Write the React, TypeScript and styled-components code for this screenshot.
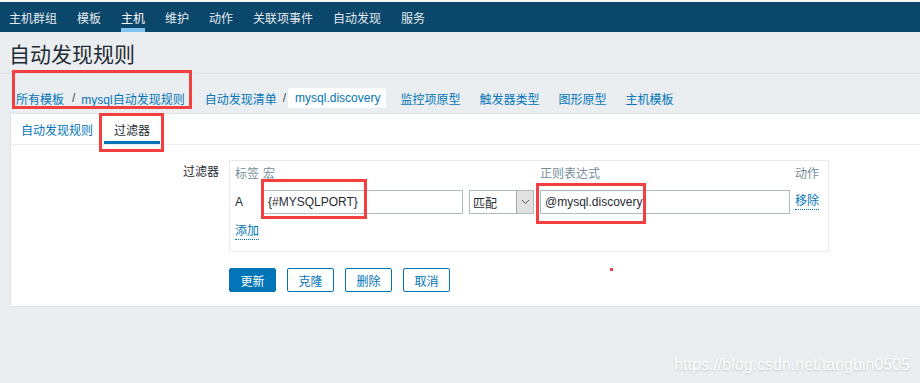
import React from 'react';
import styled, { createGlobalStyle } from 'styled-components';

const GlobalStyle = createGlobalStyle`
  html, body {
    margin: 0;
    padding: 0;
    background: #ebeef1;
    overflow: hidden;
    font-family: "Liberation Sans", "Noto Sans CJK SC", Arial, sans-serif;
    font-size: 12px;
    color: #1f2c33;
  }
`;

const Page = styled.div`
  position: relative;
  width: 920px;
  height: 383px;
  overflow: hidden;
`;

const TopNav = styled.nav`
  display: flex;
  gap: 20px;
  height: 30px;
  padding-left: 9px;
  background: #0b466b;
  border-top: 2px solid #f3f5f6;
`;

const NavItem = styled.a<{ $active?: boolean }>`
  display: flex;
  align-items: center;
  color: ${p => (p.$active ? '#ffffff' : '#e4ebef')};
  border-bottom: 4px solid ${p => (p.$active ? '#82c4f2' : 'transparent')};
  padding-top: 4px;
  cursor: pointer;
`;

const Header = styled.div`
  display: flex;
  align-items: center;
  height: 41px;
  padding-left: 9px;
  border-bottom: 1px solid #dde3e6;
`;

const Title = styled.h1`
  margin: 0;
  font-size: 21px;
  font-weight: normal;
  color: #1f2c33;
`;

const Crumbs = styled.div`
  display: flex;
  align-items: center;
  height: 20px;
  padding: 14px 0 5px 16px;
`;

const CrumbGroup = styled.div`
  position: relative;
  display: flex;
  align-items: center;
  height: 20px;
  & + & {
    margin-left: 20px;
  }
`;

const CrumbLink = styled.a`
  color: #0275b8;
  cursor: pointer;
`;

const Sep = styled.span<{ $tight?: boolean }>`
  color: #3c4a52;
  margin: ${p => (p.$tight ? '0 3px 0 6px' : '0 6px 0 8px')};
`;

const CrumbCurrent = styled.span`
  display: flex;
  align-items: center;
  height: 20px;
  padding: 0 6px 0 7px;
  background: #ffffff;
  border-radius: 2px;
  color: #0275b8;
  margin-left: -1px;
`;

const SubLink = styled.a<{ $first?: boolean }>`
  color: #0275b8;
  margin-left: ${p => (p.$first ? '14px' : '19px')};
  cursor: pointer;
`;

const Panel = styled.div`
  margin-left: 10px;
  margin-right: -10px;
  background: #ffffff;
  border: 1px solid #dfe4e7;
  padding-bottom: 14px;
`;

const Tabs = styled.div`
  display: flex;
  height: 30px;
  border-bottom: 1px solid #ebeef1;
`;

const Tab = styled.div<{ $active?: boolean }>`
  position: relative;
  display: flex;
  align-items: center;
  padding: 0 10px;
  color: ${p => (p.$active ? '#1f2c33' : '#0275b8')};
  box-shadow: ${p => (p.$active ? 'inset 0 -3px 0 #0275b8' : 'none')};
  & + & {
    margin-left: 1px;
  }
`;

const Form = styled.div`
  display: grid;
  grid-template-columns: 208px auto;
  column-gap: 10px;
  row-gap: 16px;
  padding-top: 15px;
`;

const FieldLabel = styled.div`
  text-align: right;
  line-height: 20px;
  padding-top: 2px;
`;

const FilterBox = styled.div`
  width: 584px;
  border: 1px solid #e8ebed;
  padding: 1px 9px 9px 5px;
  display: grid;
  grid-template-columns: 28px 206px 71px 255px auto;
  grid-template-rows: 20px 24px 20px;
  row-gap: 8px;
  align-items: center;
`;

const ColHead = styled.div<{ $right?: boolean }>`
  color: #768d99;
  text-align: ${p => (p.$right ? 'right' : 'left')};
`;

const RowKey = styled.div`
  color: #1f2c33;
`;

const Field = styled.div<{ $w: number }>`
  position: relative;
  box-sizing: border-box;
  width: ${p => p.$w}px;
  height: 24px;
  border: 1px solid #acbbc2;
  padding-left: 4px;
  display: flex;
  align-items: center;
  background: #ffffff;
  color: #1f2c33;
  white-space: nowrap;
`;

const Select = styled.div`
  box-sizing: border-box;
  width: 65px;
  height: 24px;
  border: 1px solid #acbbc2;
  display: flex;
  align-items: stretch;
  background: #ffffff;
`;

const SelectValue = styled.span`
  flex: 1;
  display: flex;
  align-items: center;
  padding-left: 3px;
`;

const SelectArrow = styled.span`
  width: 16px;
  background: #e1e1e1;
  border-left: 1px solid #a6a6a6;
  display: flex;
  align-items: center;
  justify-content: center;
`;

const DottedLink = styled.a`
  justify-self: start;
  color: #0275b8;
  border-bottom: 1px dotted #0275b8;
  line-height: 15px;
  cursor: pointer;
`;

const Buttons = styled.div`
  position: relative;
  display: flex;
  gap: 11px;
`;

const Button = styled.button<{ $primary?: boolean }>`
  box-sizing: border-box;
  width: 47px;
  height: 24px;
  padding: 0;
  border: 1px solid #0275b8;
  border-radius: 2px;
  background: ${p => (p.$primary ? '#0275b8' : '#ffffff')};
  color: ${p => (p.$primary ? '#ffffff' : '#0275b8')};
  font-family: inherit;
  font-size: 12px;
  cursor: pointer;
`;

// red annotation frames drawn over the screenshot
const Mark = styled.span<{ $l: number; $t: number; $w: number; $h: number }>`
  position: absolute;
  left: ${p => p.$l}px;
  top: ${p => p.$t}px;
  width: ${p => p.$w}px;
  height: ${p => p.$h}px;
  box-sizing: border-box;
  border: 3px solid #f1403f;
  pointer-events: none;
  z-index: 2;
`;

const Dot = styled.span`
  position: absolute;
  left: 381px;
  top: 0;
  width: 3px;
  height: 3px;
  background: #f1403f;
`;

const Watermark = styled.div`
  position: absolute;
  right: 10px;
  top: 355px;
  font-size: 16px;
  line-height: 20px;
  color: #ffffff;
  text-shadow: 0 1px 2px rgba(0, 0, 0, 0.18);
`;

const navItems = ['主机群组', '模板', '主机', '维护', '动作', '关联项事件', '自动发现', '服务'];
const subLinks = ['监控项原型', '触发器类型', '图形原型', '主机模板'];

export default function App() {
  return (
    <Page>
      <GlobalStyle />
      <TopNav>
        {navItems.map(n => (
          <NavItem key={n} $active={n === '主机'}>{n}</NavItem>
        ))}
      </TopNav>
      <Header>
        <Title>自动发现规则</Title>
      </Header>
      <Crumbs>
        <CrumbGroup>
          <CrumbLink>所有模板</CrumbLink>
          <Sep>/</Sep>
          <CrumbLink>mysql自动发现规则</CrumbLink>
          <Mark $l={-4} $t={-18} $w={180} $h={39} />
        </CrumbGroup>
        <CrumbGroup>
          <CrumbLink>自动发现清单</CrumbLink>
          <Sep $tight>/</Sep>
          <CrumbCurrent>mysql.discovery</CrumbCurrent>
        </CrumbGroup>
        {subLinks.map((s, i) => (
          <SubLink key={s} $first={i === 0}>{s}</SubLink>
        ))}
      </Crumbs>
      <Panel>
        <Tabs>
          <Tab>自动发现规则</Tab>
          <Tab $active>
            过滤器
            <Mark $l={-5} $t={-1} $w={65} $h={39} />
          </Tab>
        </Tabs>
        <Form>
          <FieldLabel>过滤器</FieldLabel>
          <FilterBox>
            <ColHead>标签</ColHead>
            <ColHead>宏</ColHead>
            <span />
            <ColHead>正则表达式</ColHead>
            <ColHead $right>动作</ColHead>

            <RowKey>A</RowKey>
            <Field $w={200}>
              {'{#MYSQLPORT}'}
              <Mark $l={-3} $t={-12} $w={106} $h={40} />
            </Field>
            <Select>
              <SelectValue>匹配</SelectValue>
              <SelectArrow>
                <svg width="9" height="6" viewBox="0 0 9 6">
                  <path d="M1 1l3.5 3.5L8 1" fill="none" stroke="#555" strokeWidth="1" />
                </svg>
              </SelectArrow>
            </Select>
            <Field $w={250}>
              @mysql.discovery
              <Mark $l={-5} $t={-8} $w={110} $h={41} />
            </Field>
            <DottedLink>移除</DottedLink>

            <DottedLink>添加</DottedLink>
          </FilterBox>
          <span />
          <Buttons>
            <Button $primary>更新</Button>
            <Button>克隆</Button>
            <Button>删除</Button>
            <Button>取消</Button>
            <Dot />
          </Buttons>
        </Form>
      </Panel>
      <Watermark>https://blog.csdn.net/tangbin0505</Watermark>
    </Page>
  );
}
